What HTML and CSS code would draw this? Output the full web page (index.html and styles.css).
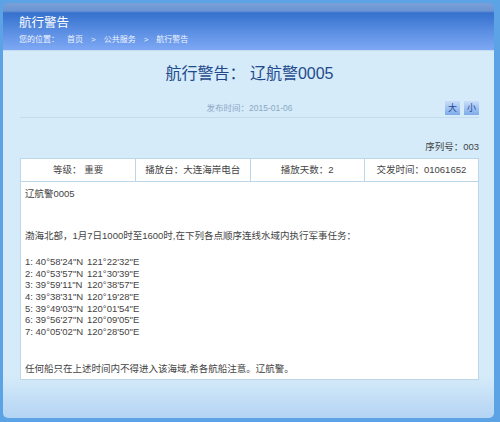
FILE: index.html
```html
<!DOCTYPE html>
<html lang="zh-CN">
<head>
  <meta charset="UTF-8">
  <title>航行警告</title>
  <link rel="stylesheet" href="styles.css">
</head>
<body>

  <div class="panel">

    <!-- ===== Header with breadcrumb ===== -->
    <header class="panel-head">
      <h1>航行警告</h1>
      <div class="crumbs">
        <span>您的位置：</span>
        <a href="#">首页</a>
        <span class="sep">&gt;</span>
        <a href="#">公共服务</a>
        <span class="sep">&gt;</span>
        <a href="#">航行警告</a>
      </div>
    </header>

    <!-- ===== Notice ===== -->
    <section class="panel-body">
      <h2 class="notice-title">航行警告： 辽航警0005</h2>

      <div class="meta-bar">
        <span></span>
        <span class="pub-time">发布时间：2015-01-06</span>
        <div class="size-btns">
          <button>大</button>
          <button>小</button>
        </div>
      </div>

      <div class="serial">序列号：003</div>

      <div class="notice">
        <div class="notice-info">
          <div>等级：&nbsp;重要</div>
          <div>播放台：大连海岸电台</div>
          <div>播放天数：2</div>
          <div>交发时间：01061652</div>
        </div>
        <div class="notice-text">
          <p class="code">辽航警0005</p>
          <p class="lead">渤海北部，1月7日1000时至1600时,在下列各点顺序连线水域内执行军事任务：</p>
          <ul class="points">
            <li><span class="lat">1: 40°58'24"N</span>121°22'32"E</li>
            <li><span class="lat">2: 40°53'57"N</span>121°30'39"E</li>
            <li><span class="lat">3: 39°59'11"N</span>120°38'57"E</li>
            <li><span class="lat">4: 39°38'31"N</span>120°19'28"E</li>
            <li><span class="lat">5: 39°49'03"N</span>120°01'54"E</li>
            <li><span class="lat">6: 39°56'27"N</span>120°09'05"E</li>
            <li><span class="lat">7: 40°05'02"N</span>120°28'50"E</li>
          </ul>
          <p class="tail">任何船只在上述时间内不得进入该海域,希各航船注意。辽航警。</p>
        </div>
      </div>
    </section>

  </div>

</body>
</html>
```

FILE: styles.css
```css
/* ===== Basic Reset & Frame ===== */
html, body {
  height: 100%;
}
body {
  margin: 0;
  background: #5ba3e5;
  font-family: "Liberation Sans", "Noto Sans CJK SC", sans-serif;
  color: #444;
}
.panel {
  box-sizing: border-box;
  height: calc(100% - 7px);
  margin: 3px 6px 4px 3px;
  border-radius: 5px;
  overflow: hidden;
  display: flex;
  flex-direction: column;
}

/* ===== Header ===== */
.panel-head {
  height: 48px;
  box-sizing: border-box;
  padding: 13px 16px 0;
  background: linear-gradient(to bottom, #7aa0d6 0, #6a94d4 8px, #3571cd 10px, #5a8ee2 60%, #7ea8f4 100%);
  border-bottom: 1px solid #c4ddf2;
  color: #fff;
}
.panel-head h1 {
  margin: 0;
  font-size: 12.5px;
  line-height: 15px;
  font-weight: normal;
}
.crumbs {
  margin-top: 4px;
  font-size: 8px;
  line-height: 10px;
  color: #eef4ff;
  display: flex;
  gap: 8px;
}
.crumbs a {
  color: #eef4ff;
  text-decoration: none;
}

/* ===== Body ===== */
.panel-body {
  flex: 1;
  padding: 0 15px 0 17px;
  background: linear-gradient(to bottom, #d5ebf9 0, #d5ebf9 calc(100% - 42px), #b4d4f4 100%);
}
.notice-title {
  margin: 13px 0 0;
  text-align: center;
  font-size: 16px;
  line-height: 20px;
  font-weight: normal;
  color: #1e4a8c;
}
.meta-bar {
  margin-top: 12px;
  height: 21px;
  display: grid;
  grid-template-columns: 1fr auto 1fr;
  align-items: center;
  border-bottom: 1px solid #c2dcee;
}
.pub-time {
  font-size: 8.5px;
  color: #8ca8c6;
}
.size-btns {
  justify-self: end;
  display: flex;
  gap: 4px;
  padding-top: 2px;
}
.size-btns button {
  width: 15px;
  height: 14px;
  padding: 0;
  border: none;
  background: linear-gradient(to bottom, #c8def8, #7eaaea);
  color: #1c4c98;
  font-family: "Noto Sans CJK SC", sans-serif;
  font-size: 9px;
  line-height: 14px;
  cursor: pointer;
}
.serial {
  margin-top: 23px;
  text-align: right;
  font-size: 9.5px;
  line-height: 12px;
}

/* ===== Notice table ===== */
.notice {
  margin-top: 5px;
  border: 1px solid #bcd6ea;
  background: #fff;
}
.notice-info {
  display: grid;
  grid-template-columns: repeat(4, 1fr);
  border-bottom: 1px solid #bcd6ea;
}
.notice-info div {
  height: 22px;
  line-height: 22px;
  text-align: center;
  font-size: 9.5px;
  border-left: 1px solid #bcd6ea;
}
.notice-info div:first-child {
  border-left: none;
}
.notice-text {
  padding: 6px 4px 4px;
  font-size: 9.5px;
  line-height: 11.6px;
}
.notice-text p {
  margin: 0;
}
.lead {
  margin-top: 30px !important;
}
.points {
  list-style: none;
  margin: 15px 0 0;
  padding: 0;
}
.points .lat {
  display: inline-block;
  width: 62px;
}
.tail {
  margin-top: 26px !important;
}
```
